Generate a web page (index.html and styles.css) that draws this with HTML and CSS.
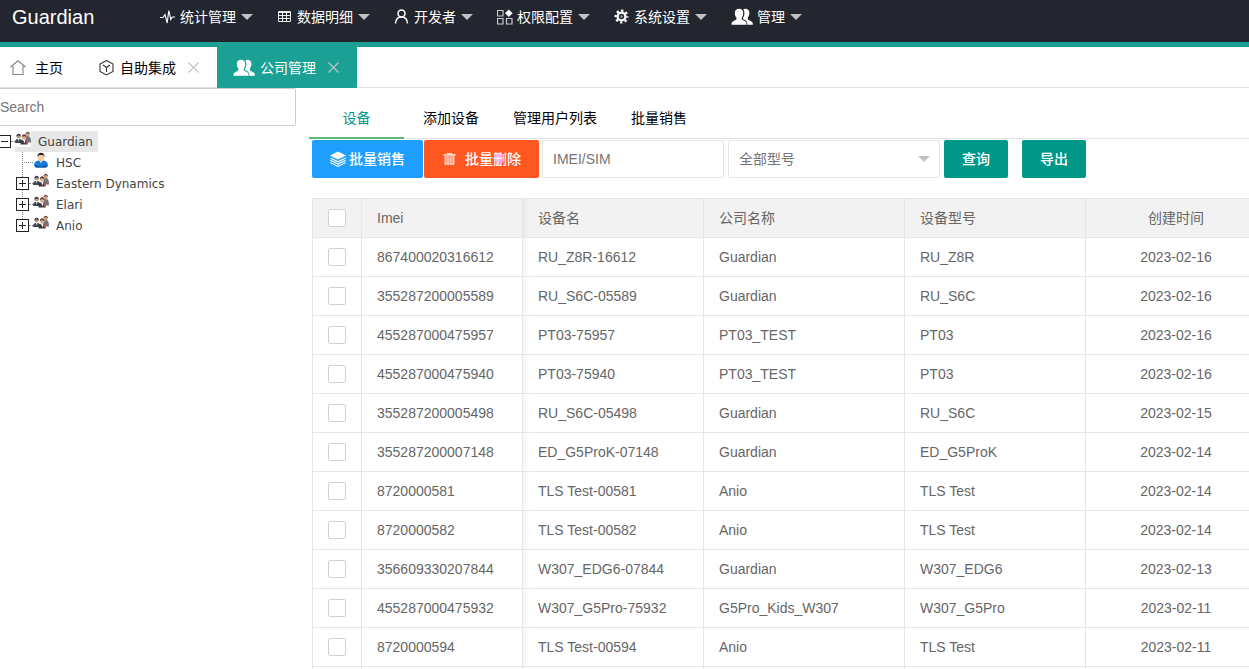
FILE: index.html
```html
<!DOCTYPE html>
<html lang="zh-CN">
<head>
<meta charset="utf-8">
<title>Guardian</title>
<link rel="stylesheet" href="styles.css">
</head>
<body>
<svg class="defs" aria-hidden="true">
  <symbol id="i-users" viewBox="0 0 22 18">
    <path fill="currentColor" d="M8 .8c2.700 0 4.300 1.800 4.200 4.400 0 1.900-.6 3.500-1.400 4.400v2c2 1.200 4.200 1.600 4.600 3.100.2.700.2 1.300.2 2H.5c0-.9 0-1.400.2-2 .5-1.500 3-1.900 4.700-3.100v-2C4.500 8.700 3.800 7.100 3.800 5.200 3.700 2.600 5.300.8 8 .8z"/>
    <path fill="currentColor" d="M14.300.8c2.600 0 4.200 1.700 4.100 4.200 0 1.800-.6 3.400-1.500 4.300v2.100c1.800 1.100 4.100 1.600 4.600 3.100.3.700.3 1.400.3 2.200h-5.500c0-.9 0-1.800-.3-2.500-.5-1.500-2.300-2.200-4-3.100V9.900c.9-1.200 1.400-2.900 1.400-4.900 0-1.500-.4-2.800-1.200-3.700.6-.3 1.300-.5 2.100-.5z"/>
  </symbol>
  <symbol id="i-team" viewBox="0 0 16 16">
    <rect width="16" height="16" fill="#fff"/>
    <path d="M0 12c0-3.500 1.500-4 3.500-4S8 8.500 8 12z" fill="#3d454f"/>
    <circle cx="3.600" cy="5.600" r="2" fill="#b8977f"/><path d="M1.300 5.400c0-3.600 4.800-3.600 4.600 0L3.800 4.200z" fill="#30363e"/>
    <path d="M10 10.500c0-4.500 1-5.500 3-5.500s3 2 3 6.500h-5z" fill="#70757c"/>
    <circle cx="12.800" cy="3.600" r="1.900" fill="#cfa085"/><path d="M10.500 3.300c0-3.500 4.600-3.500 4.500 0l-2.200-1.200z" fill="#6e4a3c"/>
    <path d="M5.500 13.500c0-4 1.500-4.500 3.700-4.500 2 0 3.400 1 3.400 4.500z" fill="#363a40"/>
    <path d="M8 9h2.500l-.7 3.500z" fill="#fff"/><path d="M10.500 9.600l1.700-.2.200 3.600h-1z" fill="#b84a45"/>
    <circle cx="9.200" cy="6.600" r="2.200" fill="#dcae8e"/><path d="M6.700 6.300c0-4.200 5-4 4.800 0L9 4.900z" fill="#6d3e34"/>
    <path d="M3 8h1.200l-.5 2.800z" fill="#fff"/>
  </symbol>
  <symbol id="i-x" viewBox="0 0 11 11"><path d="M.5.5l10 10M10.500.5l-10 10" stroke="currentColor" stroke-width="1.200"/></symbol>
</svg>

<header class="topbar">
  <a class="logo" href="#">Guardian</a>
  <nav class="nav">
    <a href="#"><svg class="ico" viewBox="0 0 16 16"><path d="M0 8.500h3L5 5.500 7.200 14 8.800 1.500l2 9 1.400-2.500H15" fill="none" stroke="currentColor" stroke-width="1.100"/></svg>统计管理<i class="caret"></i></a>
    <a href="#"><svg class="ico" viewBox="0 0 16 16"><path d="M1.500 2.500h12v10h-12zM1.500 3.500h12M1.500 6.500h12M1.500 9.500h12M5.500 3v9.500M9.500 3v9.500" fill="none" stroke="currentColor" stroke-width=".9"/></svg>数据明细<i class="caret"></i></a>
    <a href="#"><svg class="ico" viewBox="0 0 16 16"><circle cx="7.500" cy="4.400" r="3.500" fill="none" stroke="currentColor" stroke-width="1.500"/><path d="M1.500 14.500c.2-4 2.200-6.600 6-6.600s5.800 2.600 6 6.600" fill="none" stroke="currentColor" stroke-width="1.500"/></svg>开发者<i class="caret"></i></a>
    <a href="#"><svg class="ico" viewBox="0 0 16 16"><path d="M.5 1.500H6V7H.5zM.5 9.500H6V15H.5zM9.500 9.500H15V15H9.500z" fill="none" stroke="#c9cacc" stroke-width="1.200"/><path d="M11.800.5l3.800 3.800-3.800 3.800L8 4.300z" fill="currentColor"/></svg>权限配置<i class="caret"></i></a>
    <a href="#"><svg class="ico" viewBox="0 0 16 16"><circle cx="7.500" cy="7.500" r="3.900" fill="none" stroke="currentColor" stroke-width="2.400"/><circle cx="7.500" cy="7.500" r="5.900" fill="none" stroke="currentColor" stroke-width="2.200" stroke-dasharray="2.317 2.317" stroke-dashoffset="1.158"/><circle cx="7.500" cy="7.500" r="1.300" fill="#9a9ca0"/></svg>系统设置<i class="caret"></i></a>
    <a href="#"><svg class="ico wide"><use href="#i-users"/></svg>管理<i class="caret"></i></a>
  </nav>
</header>

<div class="pagetabs">
  <div class="ptab home"><svg class="ico" viewBox="0 0 16 16"><path d="M.5 7L8 .8 15.500 7M3 6v8.500h10V6" fill="none" stroke="#8a8178" stroke-width="1.100"/></svg><a href="#">主页</a></div>
  <div class="ptab"><svg class="ico" viewBox="0 0 16 16"><path d="M7.500.5L14 4v7.500L7.500 15 1 11.500V4zM4 5l3.500 2.500L11 5M7.500 7.500V12" fill="none" stroke="#333" stroke-width="1.100"/></svg><a href="#">自助集成</a><button class="close" aria-label="关闭自助集成"><svg><use href="#i-x"/></svg></button></div>
  <div class="ptab on"><svg class="ico wide"><use href="#i-users"/></svg><a href="#">公司管理</a><button class="close" aria-label="关闭公司管理"><svg><use href="#i-x"/></svg></button></div>
</div>

<div class="body">
  <aside class="side">
    <input class="search" type="text" placeholder="Search" aria-label="Search">
    <ul class="tree">
      <li>
        <div class="node"><button class="exp open" aria-label="收起 Guardian"></button><a class="sel" href="#"><svg><use href="#i-team"/></svg>Guardian</a></div>
        <ul class="kids">
          <li class="node leaf"><a href="#"><svg viewBox="0 0 16 16"><path d="M1 14c0-4 2-5 4.500-5.500h5C13 9 15 10 15 14l-2 1.500H3z" fill="#167bd6"/><path d="M2 13c4 2 8 2 12 0l-1 2.500H3z" fill="#0a4d9f"/><path d="M6 8h4l-2 3.500z" fill="#f2c9a0"/><ellipse cx="8" cy="5" rx="3.200" ry="4" fill="#f2c9a0"/><path d="M4.500 5C3.800-.8 12.200-.8 11.500 5l-1.200-2H6z" fill="#1d2229"/></svg>HSC</a></li>
          <li class="node"><button class="exp" aria-label="展开 Eastern Dynamics"></button><a href="#"><svg><use href="#i-team"/></svg>Eastern Dynamics</a></li>
          <li class="node"><button class="exp" aria-label="展开 Elari"></button><a href="#"><svg><use href="#i-team"/></svg>Elari</a></li>
          <li class="node"><button class="exp" aria-label="展开 Anio"></button><a href="#"><svg><use href="#i-team"/></svg>Anio</a></li>
        </ul>
      </li>
    </ul>
  </aside>

  <main class="main">
    <nav class="subtabs">
      <a class="on" href="#">设备</a><a href="#">添加设备</a><a href="#">管理用户列表</a><a href="#">批量销售</a>
    </nav>
    <div class="tools">
      <div class="group">
        <button class="btn blue"><svg viewBox="0 0 17 16"><path d="M8 .5L16 4.500 8 8.500 0 4.500z" fill="#fff"/><path d="M.3 7L8 10.800 15.700 7M.3 9.300L8 13.100l7.700-3.800M.3 11.600L8 15.400l7.700-3.800" fill="none" stroke="#fff" stroke-width="1.100"/></svg>批量销售</button>
        <button class="btn red"><svg viewBox="0 0 16 16"><path d="M1.500 3h12v1.800h-12zM5 2h5v1H5z" fill="#ffd9cd"/><path d="M3.200 5v8h8.600V5" fill="#ff9d80" stroke="#ffd9cd" stroke-width="1.300"/><path d="M6 6v5.500M9 6v5.500" stroke="#ffd9cd"/></svg>批量删除</button>
      </div>
      <input class="field" type="text" placeholder="IMEI/SIM" aria-label="IMEI/SIM">
      <div class="pick"><select aria-label="型号"><option>全部型号</option></select><i class="caret"></i></div>
      <button class="btn green">查询</button>
      <button class="btn green export">导出</button>
    </div>
    <div class="gridwrap">
      <table class="grid">
        <colgroup><col class="c-check"><col class="c-imei"><col class="c-name"><col class="c-company"><col class="c-model"><col class="c-date"></colgroup>
        <thead><tr><th><input type="checkbox" aria-label="全选"></th><th>Imei</th><th>设备名</th><th>公司名称</th><th>设备型号</th><th>创建时间</th></tr></thead>
        <tbody>
          <tr><td><input type="checkbox" aria-label="选择"></td><td>867400020316612</td><td>RU_Z8R-16612</td><td>Guardian</td><td>RU_Z8R</td><td>2023-02-16</td></tr>
          <tr><td><input type="checkbox" aria-label="选择"></td><td>355287200005589</td><td>RU_S6C-05589</td><td>Guardian</td><td>RU_S6C</td><td>2023-02-16</td></tr>
          <tr><td><input type="checkbox" aria-label="选择"></td><td>455287000475957</td><td>PT03-75957</td><td>PT03_TEST</td><td>PT03</td><td>2023-02-16</td></tr>
          <tr><td><input type="checkbox" aria-label="选择"></td><td>455287000475940</td><td>PT03-75940</td><td>PT03_TEST</td><td>PT03</td><td>2023-02-16</td></tr>
          <tr><td><input type="checkbox" aria-label="选择"></td><td>355287200005498</td><td>RU_S6C-05498</td><td>Guardian</td><td>RU_S6C</td><td>2023-02-15</td></tr>
          <tr><td><input type="checkbox" aria-label="选择"></td><td>355287200007148</td><td>ED_G5ProK-07148</td><td>Guardian</td><td>ED_G5ProK</td><td>2023-02-14</td></tr>
          <tr><td><input type="checkbox" aria-label="选择"></td><td>8720000581</td><td>TLS Test-00581</td><td>Anio</td><td>TLS Test</td><td>2023-02-14</td></tr>
          <tr><td><input type="checkbox" aria-label="选择"></td><td>8720000582</td><td>TLS Test-00582</td><td>Anio</td><td>TLS Test</td><td>2023-02-14</td></tr>
          <tr><td><input type="checkbox" aria-label="选择"></td><td>356609330207844</td><td>W307_EDG6-07844</td><td>Guardian</td><td>W307_EDG6</td><td>2023-02-13</td></tr>
          <tr><td><input type="checkbox" aria-label="选择"></td><td>455287000475932</td><td>W307_G5Pro-75932</td><td>G5Pro_Kids_W307</td><td>W307_G5Pro</td><td>2023-02-11</td></tr>
          <tr><td><input type="checkbox" aria-label="选择"></td><td>8720000594</td><td>TLS Test-00594</td><td>Anio</td><td>TLS Test</td><td>2023-02-11</td></tr>
          <tr><td></td><td></td><td></td><td></td><td></td><td></td></tr>
        </tbody>
      </table>
    </div>
  </main>
</div>
</body>
</html>
```

FILE: styles.css
```css
* { box-sizing: border-box; }
body {
  margin: 0;
  height: 100vh;
  overflow: hidden;
  display: flex;
  flex-direction: column;
  background: #fff;
  color: #000;
  font: 14px/20px "Liberation Sans", "Noto Sans CJK SC", sans-serif;
}
a { color: inherit; text-decoration: none; }
ul { list-style: none; margin: 0; padding: 0; }
button, input, select { font: inherit; margin: 0; }
svg { display: block; flex: none; }
.defs { position: absolute; width: 0; height: 0; }

.ico { width: 16px; height: 16px; }
.ico.wide { width: 22px; height: 18px; }
.caret {
  border: 6px solid transparent;
  border-top-color: #c2c2c2;
  border-bottom-width: 0;
}

.topbar {
  flex: none;
  display: flex;
  height: 47px;
  padding-bottom: 8px;
  padding-left: 12px;
  align-items: center;
  background: #23262e;
  border-bottom: 5px solid #1aa094;
  color: #fff;
}
.logo { width: 148px; font-size: 20px; }
.nav { display: flex; gap: 24px; }
.nav a { display: flex; align-items: center; gap: 4px; white-space: nowrap; }
.nav .caret { margin-left: 1px; }

.pagetabs {
  flex: none;
  display: flex;
  height: 41px;
  border-bottom: 1px solid #e2e2e2;
}
.ptab {
  display: flex;
  align-items: center;
  height: 41px;
  gap: 5px;
  padding: 0 18px 0 16px;
  white-space: nowrap;
}
.ptab.home { gap: 9px; padding: 0 20px 0 10px; }
.ptab.on { background: #1aa094; color: #fff; }
.close {
  margin-left: 7px;
  padding: 0;
  border: 0;
  background: none;
  color: #c2c2c2;
}
.close svg { width: 11px; height: 11px; }

.body { flex: 1; display: flex; min-height: 0; }
.side { flex: none; width: 296px; }
.search {
  display: block;
  width: 100%;
  height: 38px;
  padding: 0;
  border: 1px solid #ccc;
  border-left: 0;
  border-radius: 0 2px 2px 0;
  outline: 0;
}
::placeholder { color: #757575; opacity: 1; }

.tree {
  margin: 5px 0 0 -2px;
  font: 12px/22px "DejaVu Sans", sans-serif;
  color: #444;
}
.node { display: flex; align-items: center; height: 21px; }
.node::before { content: ""; order: 1; width: 4px; border-top: 1px dotted #888; }
.node a {
  order: 2;
  display: flex;
  height: 21px;
  gap: 7px;
  padding-right: 5px;
}
.node svg { width: 16px; height: 16px; }
.sel { background: #e7e7e7; }
.kids {
  padding-left: 18px;
  background: repeating-linear-gradient(#888 0 1px, transparent 1px 2px) 24px 0 / 1px 74px no-repeat;
}
.leaf { padding-left: 6px; }
.leaf::before { width: 11px; }
.exp {
  width: 13px;
  height: 13px;
  padding: 0;
  border: 1px solid #222;
  background:
    linear-gradient(#222, #222) center / 7px 1px no-repeat,
    linear-gradient(#222, #222) center / 1px 7px no-repeat,
    #fff;
}
.exp.open { background: linear-gradient(#222, #222) center / 7px 1px no-repeat, #fff; }

.main { flex: 1; min-width: 0; padding: 10px 0 0 13px; overflow: hidden; }
.subtabs {
  display: flex;
  gap: 4px;
  height: 41px;
  border-bottom: 1px solid #e2e2e2;
}
.subtabs a {
  height: 41px;
  padding: 0 15px;
  line-height: 40px;
  text-align: center;
}
.subtabs .on { min-width: 95px; color: #009688; border-bottom: 2px solid #5fb878; }

.tools { display: flex; gap: 4px; padding: 1px 0 0 3px; }
.group { display: flex; gap: 1px; margin-right: -1px; }
.btn {
  display: flex;
  align-items: center;
  height: 38px;
  padding: 0 18px;
  border: 0;
  border-radius: 2px;
  color: #fff;
  font-weight: 500;
  white-space: nowrap;
}
.blue { gap: 2px; background: #1e9fff; }
.blue svg { width: 17px; height: 16px; }
.red { gap: 7px; background: #ff5722; }
.red svg { width: 16px; height: 16px; }
.green { background: #009688; }
.export { margin-left: 10px; }
.field {
  width: 182px;
  height: 38px;
  padding: 0 10px;
  border: 1px solid #e6e6e6;
  border-radius: 2px;
}
.pick {
  display: grid;
  grid-template-columns: 1fr auto;
  align-items: center;
  width: 212px;
  height: 38px;
  padding-right: 9px;
  border: 1px solid #e6e6e6;
  border-radius: 2px;
}
.pick select {
  height: 36px;
  padding: 0 10px;
  border: 0;
  background: none;
  appearance: none;
  color: #757575;
}

.gridwrap { margin: 20px 0 0 3px; overflow: hidden; }
.grid {
  width: 955px;
  table-layout: fixed;
  border-spacing: 0;
  border-left: 1px solid #e6e6e6;
  color: #666;
}
.c-check { width: 49px; }
.c-imei { width: 161px; }
.c-name, .c-model, .c-date { width: 181px; }
.c-company { width: 201px; }
.grid th, .grid td {
  height: 39px;
  padding: 0 15px;
  border: solid #e6e6e6;
  border-width: 0 1px 1px 0;
  font-weight: 400;
  text-align: left;
  white-space: nowrap;
}
.grid th { height: 40px; border-top-width: 1px; background: #f2f2f2; }
.grid :is(th, td):last-child { text-align: center; }
.grid :is(th, td):nth-child(3) {
  background-image: linear-gradient(90deg, rgba(0, 0, 0, .04), transparent);
  background-size: 7px 100%;
  background-repeat: no-repeat;
}
.grid input {
  display: block;
  width: 18px;
  height: 18px;
  border: 1px solid #d2d2d2;
  border-radius: 2px;
  background: #fff;
  appearance: none;
}
.grid input:checked { background: #5fb878; }
```
